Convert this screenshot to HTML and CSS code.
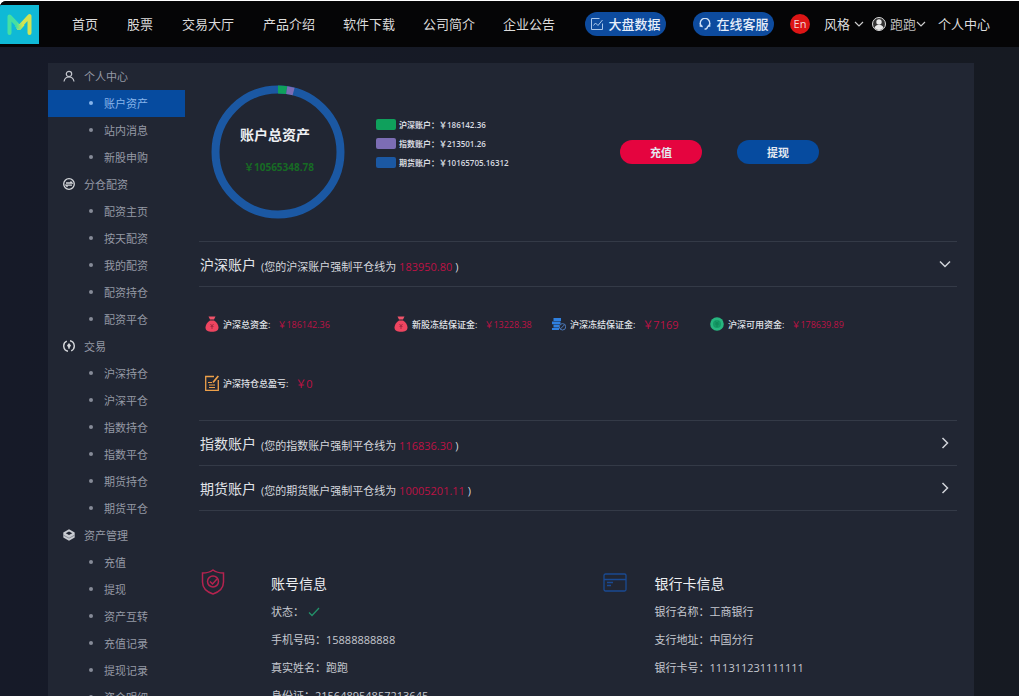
FILE: index.html
```html
<!DOCTYPE html>
<html lang="zh-CN">
<head>
<meta charset="utf-8">
<title>个人中心</title>
<meta name="viewport" content="width=device-width, initial-scale=1">
<link rel="stylesheet" href="styles.css">
</head>
<body>
<div class="app">
  <header class="topbar">
    <a class="logo" href="#" aria-label="M">
      <svg viewBox="0 0 39 39" width="39" height="39" aria-hidden="true">
        <defs>
          <linearGradient id="lg" x1="0" x2="1"><stop offset="0" stop-color="#3fe0a4"/><stop offset="1" stop-color="#d8e64a"/></linearGradient>
        </defs>
        <rect width="39" height="39" fill="#0fb9d6"/>
        <path d="M9.500 28V11.500L19.500 22" fill="none" stroke="#46e0a2" stroke-width="4" stroke-linecap="round" stroke-linejoin="round"/>
        <path d="M18.500 23L29.500 11V28" fill="none" stroke="#d3e352" stroke-width="4" stroke-linecap="round" stroke-linejoin="round"/>
        <path d="M16 19.500L19.500 23L23 19" fill="none" stroke="url(#lg)" stroke-width="4" stroke-linejoin="round"/>
      </svg>
    </a>
    <nav class="nav">
      <a href="#">首页</a><a href="#">股票</a><a href="#">交易大厅</a><a href="#">产品介绍</a><a href="#">软件下载</a><a href="#">公司简介</a><a href="#">企业公告</a>
    </nav>
    <div class="pills">
      <button class="pill" type="button">
        <svg viewBox="0 0 12 12" width="12" height="12" fill="none" stroke="#a9c6ea" aria-hidden="true"><path d="M11.500 5.500V11.500H.5V.5H8.500"/><path d="M2.500 7.500L4.500 5L7 7.500L11.500 2"/></svg>
        大盘数据
      </button>
      <button class="pill" type="button">
        <svg viewBox="0 0 12 12" width="12" height="12" fill="none" stroke="#cfe0f5" aria-hidden="true"><path d="M3.500 9A4.700 4.700 0 1 1 8.500 9" stroke-width="1.300"/><path d="M1.300 5V8H3.300M10.700 5V8H8.700M8.500 8.500C8.500 10.500 7.500 11.200 5.500 11.200" stroke-width="1.300"/></svg>
        在线客服
      </button>
    </div>
    <div class="user">
      <button class="lang" type="button">En</button>
      <button class="menu theme" type="button">风格
        <svg viewBox="0 0 10 6" width="10" height="6" fill="none" stroke="#ccc" stroke-width="1.200" aria-hidden="true"><path d="M1 1L5 5L9 1"/></svg>
      </button>
      <button class="menu account" type="button">
        <svg class="avatar" viewBox="0 0 14 14" width="14" height="14" aria-hidden="true"><circle cx="7" cy="7" r="6.500" fill="#333" stroke="#ddd"/><circle cx="7" cy="5" r="2.700" fill="#e8e8e8"/><path d="M2.500 11C3 8.500 5 8 7 8S11 8.500 11.500 11C9 13.500 5 13.500 2.500 11Z" fill="#e8e8e8"/></svg>
        跑跑<svg viewBox="0 0 10 6" width="10" height="6" fill="none" stroke="#ccc" stroke-width="1.200" aria-hidden="true"><path d="M1 1L5 5L9 1"/></svg>
      </button>
      <a href="#">个人中心</a>
    </div>
  </header>

  <div class="panel">
    <aside class="side">
      <h2 class="group">
        <svg viewBox="0 0 12 12" width="12" height="12" fill="none" stroke="#c3c6cd" stroke-width="1.200" aria-hidden="true"><circle cx="6" cy="4" r="2.700"/><path d="M1 11.500C1.500 8.500 3.500 7 6 7S10.500 8.500 11 11.500"/></svg>个人中心</h2>
      <ul class="items">
        <li><a class="active" href="#">账户资产</a></li>
        <li><a href="#">站内消息</a></li>
        <li><a href="#">新股申购</a></li>
      </ul>
      <h2 class="group">
        <svg viewBox="0 0 12 12" width="12" height="12" fill="none" stroke="#d5d7db" aria-hidden="true"><circle cx="6" cy="6" r="5.300" stroke-width="1.300"/><path d="M3 5H9L7.500 3.500M9 7.200H3L4.500 8.700" stroke-width="1.300"/></svg>分仓配资</h2>
      <ul class="items">
        <li><a href="#">配资主页</a></li>
        <li><a href="#">按天配资</a></li>
        <li><a href="#">我的配资</a></li>
        <li><a href="#">配资持仓</a></li>
        <li><a href="#">配资平仓</a></li>
      </ul>
      <h2 class="group">
        <svg viewBox="0 0 12 12" width="12" height="12" fill="none" stroke="#d5d7db" aria-hidden="true"><path d="M3.800 1.200A5.300 5.300 0 0 0 5 11.200M8.200 10.800A5.300 5.300 0 0 0 7 .8" stroke-width="1.400"/><path d="M6 3L8 5.500L6 8.500L4 5.500Z" fill="#d5d7db" stroke="none"/><path d="M6 6V9"/></svg>交易</h2>
      <ul class="items">
        <li><a href="#">沪深持仓</a></li>
        <li><a href="#">沪深平仓</a></li>
        <li><a href="#">指数持仓</a></li>
        <li><a href="#">指数平仓</a></li>
        <li><a href="#">期货持仓</a></li>
        <li><a href="#">期货平仓</a></li>
      </ul>
      <h2 class="group">
        <svg viewBox="0 0 12 12" width="12" height="12" aria-hidden="true"><path d="M6 .3L11.700 3.500V8.500L6 11.700L.3 8.500V3.500Z" fill="#c9ccd2"/><path d="M6 2.500L9.300 4.200L6 6L2.700 4.200Z" fill="#212633"/><path d="M.5 6.200L6 9.200L11.500 6.200" fill="none" stroke="#6d727e" stroke-width=".7"/></svg>资产管理</h2>
      <ul class="items">
        <li><a href="#">充值</a></li>
        <li><a href="#">提现</a></li>
        <li><a href="#">资产互转</a></li>
        <li><a href="#">充值记录</a></li>
        <li><a href="#">提现记录</a></li>
        <li><a href="#">资金明细</a></li>
      </ul>
    </aside>

    <main class="main">
      <section class="summary">
        <div class="donut">
          <svg viewBox="0 0 134 134" width="134" height="134" fill="none" stroke-width="8" aria-hidden="true">
            <circle cx="67" cy="67" r="62.500" stroke="#1b58a3"/>
            <path d="M67 4.500A62.500 62.500 0 0 1 75.700 5.100" stroke="#0fa05c"/>
            <path d="M75.700 5.100A62.500 62.500 0 0 1 82.600 6.500" stroke="#7c6db4"/>
          </svg>
          <div class="total">
            <strong>账户总资产</strong>
            <span>￥10565348.78</span>
          </div>
        </div>
        <ul class="legend">
          <li><i class="key green"></i>沪深账户：￥186142.36</li>
          <li><i class="key purple"></i>指数账户：￥213501.26</li>
          <li><i class="key blue"></i>期货账户：￥10165705.16312</li>
        </ul>
        <div class="actions">
          <button class="btn red" type="button">充值</button>
          <button class="btn navy" type="button">提现</button>
        </div>
      </section>

      <section class="accounts">
        <div class="row">
          <h3>沪深账户</h3><p>(您的沪深账户强制平仓线为 <em>183950.80</em> )</p>
          <svg class="arrow" viewBox="0 0 12 12" width="12" height="12" fill="none" stroke="#d0d3d9" stroke-width="1.500" aria-hidden="true"><path d="M1 3.500L6 8.500L11 3.500"/></svg>
        </div>
        <div class="stats">
          <div class="stat">
            <svg viewBox="0 0 14 16" width="14" height="16" aria-hidden="true"><path d="M3.500 .5H10.500L9 3.500H5Z" fill="#f0536a"/><path d="M5 4.500H9C12 6.500 13.500 9 13.500 11.500C13.500 14.500 11 15.700 7 15.700S.5 14.500 .5 11.500C.5 9 2 6.500 5 4.500Z" fill="#ee4560"/><path d="M5.500 8L7 10L8.500 8M5.500 10.500H8.500M7 10V13" stroke="#a82a42" fill="none"/></svg>
            <span>沪深总资金:</span><em>￥186142.36</em>
          </div>
          <div class="stat">
            <svg viewBox="0 0 14 16" width="14" height="16" aria-hidden="true"><path d="M3.500 .5H10.500L9 3.500H5Z" fill="#f0536a"/><path d="M5 4.500H9C12 6.500 13.500 9 13.500 11.500C13.500 14.500 11 15.700 7 15.700S.5 14.500 .5 11.500C.5 9 2 6.500 5 4.500Z" fill="#ee4560"/><path d="M5.500 8L7 10L8.500 8M5.500 10.500H8.500M7 10V13" stroke="#a82a42" fill="none"/></svg>
            <span>新股冻结保证金:</span><em>￥13228.38</em>
          </div>
          <div class="stat">
            <svg viewBox="0 0 14 14" width="14" height="14" aria-hidden="true"><path d="M1.500 1H9V4H1.500ZM0 4.500H8.500V7.300H0ZM1.500 7.800H7V10.600H1.500ZM0 11.100H7V13H0Z" fill="#2f80e0"/><circle cx="10.500" cy="9.800" r="3.200" fill="#212633" stroke="#4b78b8"/><path d="M8.300 12L12.700 7.600" stroke="#4b78b8"/></svg>
            <span>沪深冻结保证金:</span><em class="big">￥7169</em>
          </div>
          <div class="stat">
            <svg viewBox="0 0 14 14" width="14" height="14" aria-hidden="true"><circle cx="7" cy="7" r="6.800" fill="#27b57f"/><circle cx="7" cy="7" r="4" fill="#169a67"/><path d="M5.500 4.500L7 6.500L8.500 4.500M5 7H9M7 6.500V10" stroke="#0e8758" fill="none"/></svg>
            <span>沪深可用资金:</span><em>￥178639.89</em>
          </div>
          <div class="stat">
            <svg viewBox="0 0 14 16" width="14" height="16" fill="none" stroke="#eda04a" stroke-width="1.300" aria-hidden="true"><path d="M9 1.500H.7V15.300H13.300V5"/><path d="M13.300 1L8 7.500" stroke-width="1.800"/><path d="M3 7.500H7M4 10H10M4 12.500H10" stroke-width="1"/></svg>
            <span>沪深持仓总盈亏:</span><em class="big">￥0</em>
          </div>
        </div>
        <div class="row">
          <h3>指数账户</h3><p>(您的指数账户强制平仓线为 <em>116836.30</em> )</p>
          <svg class="arrow" viewBox="0 0 12 12" width="12" height="12" fill="none" stroke="#d0d3d9" stroke-width="1.500" aria-hidden="true"><path d="M3.500 1L8.500 6L3.500 11"/></svg>
        </div>
        <div class="row last">
          <h3>期货账户</h3><p>(您的期货账户强制平仓线为 <em>10005201.11</em> )</p>
          <svg class="arrow" viewBox="0 0 12 12" width="12" height="12" fill="none" stroke="#d0d3d9" stroke-width="1.500" aria-hidden="true"><path d="M3.500 1L8.500 6L3.500 11"/></svg>
        </div>
      </section>

      <section class="details">
        <div class="info">
          <svg viewBox="0 0 24 26" width="24" height="26" fill="none" stroke="#b5234f" stroke-width="1.500" aria-hidden="true"><path d="M12 1C15 3.200 18.500 4 22.500 4V13C22.500 19 18 23 12 25C6 23 1.500 19 1.500 13V4C5.500 4 9 3.200 12 1Z"/><circle cx="12" cy="12.500" r="5.500"/><path d="M9 12.500L11.500 15L16 10"/></svg>
          <div>
            <h3>账号信息</h3>
            <p>状态：<svg class="tick" viewBox="0 0 12 10" width="12" height="10" fill="none" stroke="#23916a" stroke-width="1.300" aria-hidden="true"><path d="M1 5.500L4 8.500L11 1"/></svg></p>
            <p>手机号码：15888888888</p>
            <p>真实姓名：跑跑</p>
            <p>身份证：215648954857213645</p>
          </div>
        </div>
        <div class="info bank">
          <svg viewBox="0 0 24 26" width="24" height="26" fill="none" stroke="#1a4a92" stroke-width="1.300" aria-hidden="true"><rect x="1" y="5" width="22" height="17" rx="1.500"/><path d="M1 10.500H23M4 13.500H10M4 16.500H8"/></svg>
          <div>
            <h3>银行卡信息</h3>
            <p>银行名称：工商银行</p>
            <p>支行地址：中国分行</p>
            <p>银行卡号：111311231111111</p>
          </div>
        </div>
      </section>
    </main>
  </div>
</div>
</body>
</html>
```
FILE: styles.css
```css
* { box-sizing: border-box; margin: 0; padding: 0; }

body {
  background: #fff;
  font-family: "Open Sans", "Noto Sans CJK SC", sans-serif;
  font-size: 11px;
  color: #d4d7dd;
}

a { color: inherit; text-decoration: none; }
button { border: 0; background: none; color: inherit; font: inherit; cursor: pointer; white-space: nowrap; }
ul { list-style: none; }
em { font-style: normal; color: #bd1245; }
svg { flex: none; display: block; }

.app {
  height: calc(100vh - 1px);
  margin-top: 1px;
  overflow: hidden;
  border-top-left-radius: 6px;
  display: flex;
  flex-direction: column;
  background: linear-gradient(90deg, #161a28, #161a22);
}

/* Top bar */
.topbar {
  flex: none;
  height: 46px;
  padding-right: 29px;
  display: flex;
  align-items: center;
  background: #050506;
  font-size: 13px;
  line-height: 20px;
  color: #dcdcdc;
  white-space: nowrap;
}
.nav { display: flex; gap: 28px; margin-left: 33px; padding-bottom: 1px; }
.nav a:nth-child(-n+3) { margin-right: 1px; }
.pills { display: flex; gap: 27px; margin-left: 30px; padding-bottom: 1px; }
.pill {
  width: 81px;
  height: 24px;
  border-radius: 12px;
  display: flex;
  align-items: center;
  justify-content: center;
  gap: 6px;
  background: #0d4b9e;
  color: #e6eefa;
  font-weight: 500;
}
.user { display: flex; align-items: center; margin-left: auto; }
.lang {
  width: 20px;
  height: 20px;
  border-radius: 50%;
  background: #dc1515;
  font-size: 11px;
  color: #f4dada;
}
.menu { display: flex; align-items: center; }
.theme { gap: 4px; margin-left: 14px; }
.account { margin: 0 12px 0 8px; color: #bdbdbd; }
.avatar { margin-right: 4px; }

/* Panel */
.panel {
  flex: 1;
  min-height: 0;
  margin: 16px 45px 0 48px;
  display: flex;
  background: #212633;
}

.side { flex: none; width: 137px; color: #9599a5; }
.group {
  height: 27px;
  padding: 0 0 1px 15px;
  display: flex;
  align-items: center;
  gap: 9px;
  font-size: 11px;
  font-weight: 400;
}
.items a {
  height: 27px;
  padding: 0 0 1px 41px;
  display: flex;
  align-items: center;
  gap: 11px;
}
.items a::before {
  content: "";
  width: 4px;
  height: 4px;
  border-radius: 50%;
  background: #868b98;
}
.items .active { background: #064b9f; color: #86b4ea; }
.items .active::before { background: #86b4ea; }

.main { flex: 1; min-width: 0; padding: 22px 17px 0 14px; }

/* Summary */
.summary { display: flex; height: 156px; padding-left: 12px; }
.donut { flex: none; display: grid; height: 134px; }
.donut > * { grid-area: 1 / 1; }
.total {
  display: flex;
  flex-direction: column;
  align-items: center;
  gap: 12px;
  padding: 40px 6px 0 0;
}
.total strong { font-size: 14px; line-height: 20px; color: #eef0f3; }
.total span { padding-left: 8px; font-size: 10px; line-height: 20px; font-weight: 700; color: #176b24; }
.legend {
  margin: 30px 0 0 31px;
  font-size: 8px;
  font-weight: 600;
  line-height: 19px;
  color: #d8dbe0;
  white-space: nowrap;
}
.legend li { display: flex; align-items: center; gap: 3px; }
.key { width: 20px; height: 11px; border-radius: 2px; }
.green { background: #0fa05c; }
.purple { background: #7c6db4; }
.blue { background: #1b58a3; }
.actions { display: flex; gap: 35px; margin: 55px 138px 0 auto; }
.btn { width: 82px; height: 24px; border-radius: 12px; font-weight: 700; color: #e3e8f0; }
.red { background: #e5043f; }
.navy { background: #064b9f; }

/* Accounts */
.row {
  height: 45px;
  display: flex;
  align-items: center;
  border-top: 1px solid #343a47;
  padding: 0 6px 0 1px;
}
.row h3 { font-size: 14px; font-weight: 400; color: #e0e3e8; }
.row p { margin-left: 5px; padding-top: 4px; }
.arrow { margin-left: auto; }
.last { height: 46px; border-bottom: 1px solid #343a47; }
.stats {
  padding: 27px 0 27px 6px;
  border-top: 1px solid #343a47;
  display: grid;
  grid-template-columns: 189fr 158fr 158fr 247fr;
  row-gap: 39px;
}
.stat { height: 20px; display: flex; align-items: center; font-size: 9px; white-space: nowrap; }
.stat span { margin: 0 7px 0 4px; font-weight: 500; color: #e0e3e8; }
.big { font-size: 11px; }

/* Details */
.details { display: grid; grid-template-columns: 401fr 354fr; padding: 58px 0 0 2px; }
.info { display: flex; gap: 46px; line-height: 28px; white-space: nowrap; }
.bank { gap: 28px; }
.info h3 { font-size: 14px; font-weight: 400; color: #eceef1; padding-top: 1px; }
.info p { display: flex; align-items: center; color: #c6c9d0; }
.tick { margin-left: 4px; }
```
